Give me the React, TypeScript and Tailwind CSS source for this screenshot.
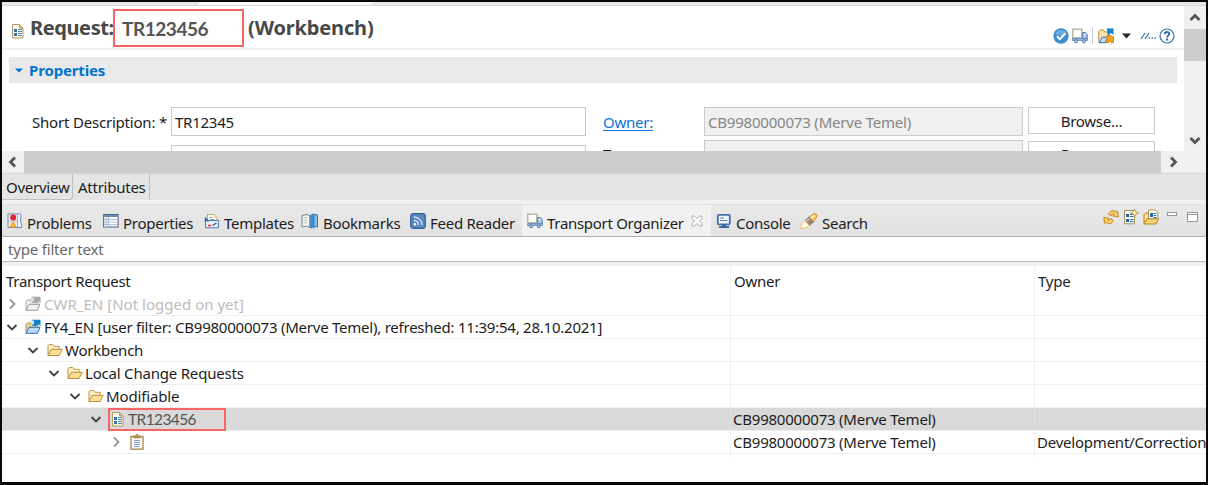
import React from "react";

type P = { className?: string };
const S = ({ className = "", children, w = 16, h = 16 }: P & { children: React.ReactNode; w?: number; h?: number }) => (
  <svg width={w} height={h} viewBox={`0 0 ${w} ${h}`} className={`block shrink-0 ${className}`}>{children}</svg>
);

const Doc = ({ className }: P) => (
  <S className={className}>
    <path d="M2.5 1.500h7l3.500 3.500v10h-10.500z" fill="#fbfaf3" stroke="#b39a5c" />
    <path d="M9.500 1.500v3.500h3.500z" fill="#e0c078" stroke="#b39a5c" strokeWidth=".8" />
    <path d="M4 6h3v3H4zM4 10h3v3H4z" fill="#2f77b5" />
    <path d="M8 6.500h4M8 8.500h4M8 10.500h4M8 12.500h4" stroke="#5a7fa8" />
  </S>
);

const Truck = ({ className }: P) => (
  <S className={className}>
    <rect x=".8" y="1.200" width="9" height="8.600" fill="#fff" stroke="#a9b294" strokeWidth="1.300" />
    <path d="M10.500 4.500h3l1.800 2.500v4h-4.800z" fill="#a9c4e4" stroke="#5b80b5" />
    <path d="M11.800 6h1.700v1.500h-1.700z" fill="#eef5fc" />
    <path d="M.5 10.500h15v2H.5z" fill="#8fafdb" stroke="#5b80b5" strokeWidth=".7" />
    <circle cx="4" cy="13.300" r="1.500" fill="#c7d8ee" stroke="#4f76ae" />
    <circle cx="11.800" cy="13.300" r="1.500" fill="#c7d8ee" stroke="#4f76ae" />
  </S>
);
const Check = ({ className }: P) => (
  <S className={className}>
    <circle cx="8" cy="8" r="7.700" fill="#3b8fd0" />
    <path d="M2 6a6.500 6.500 0 0 1 12 0Q8 9 2 6z" fill="#68addf" />
    <path d="M4 8.300l2.800 2.800L12.300 5.500" fill="none" stroke="#fff" strokeWidth="2" />
  </S>
);
const FolderRun = ({ className }: P) => (
  <S className={className}>
    <path d="M.8 14.500V3.500l1.500-1.500h3l1.500 2h3v10.500z" fill="#fbe3ab" stroke="#b98b43" />
    <path d="M8.500.500h7V7L13 5l-2.500 2.500z" fill="#1583ca" />
    <path d="M1.200 14.700l3-5.500h6l-2 5.500z" fill="#b7ddf8" stroke="#2a73be" />
    <path d="M8 9l2-1.500h3L14 9l1.500-.5v6h-2.500L12 13l-2 1.500H7.500V12h2z" fill="#f5a31a" stroke="#bd7003" strokeWidth=".7" />
  </S>
);
const Help = ({ className }: P) => (
  <S className={className}>
    <circle cx="8" cy="8" r="7" fill="#fff" stroke="#336fa9" strokeWidth="1.200" />
    <path d="M5.700 6.300C5.700 3.200 10.400 3.500 10.200 6.100C10.100 7.600 8.100 7.700 8.100 9.500" fill="none" stroke="#2f69a5" strokeWidth="1.900" />
    <rect x="7.100" y="10.500" width="2" height="2" fill="#2f69a5" />
  </S>
);
const Problems = ({ className }: P) => (
  <S className={className}>
    <path d="M1 1h11.500c3 0 1 3.500 1 6s2 4 1 7.500H1z" fill="#e9f0f9" stroke="#7189a8" />
    <path d="M1.500 8h9M10.500 1.500v12.500" stroke="#b79e78" strokeWidth=".8" />
    <circle cx="6.200" cy="4.500" r="3" fill="#df2637" />
    <path d="M3 14l2-4q1-1.500 2 0l2 4z" fill="#ffb52c" stroke="#ea9a16" strokeWidth=".8" />
  </S>
);
const Table = ({ className }: P) => (
  <S className={className}>
    <rect x=".6" y="1.500" width="14.500" height="12.500" fill="#f8fafc" stroke="#556b8e" strokeWidth="1.100" />
    <path d="M1 2h13.500v2H1z" fill="#718bb0" />
    <path d="M1 4h4.500v9.500H1z" fill="#dae5f3" />
    <path d="M5.500 4v10M1 6.500h14M1 9h14M1 11.500h14" stroke="#a6b4ca" strokeWidth=".8" />
  </S>
);
const Templates = ({ className }: P) => (
  <S className={className}>
    <path d="M3.500 9V1.500H10L13 4.500V9" fill="#fffdf2" stroke="#b5a577" />
    <path d="M10 1.500v3h3z" fill="#e4cc8a" />
    <path d="M5.500 4.500h3M5.500 6.500h5" stroke="#83a2cc" />
    <path d="M1.500 7.500h13v7.300h-13z" fill="#e6eef9" stroke="#5c78a4" />
    <path d="M1.500 4.500v4M1.500 5.500l3 3" stroke="#3b5f92" strokeWidth="1.500" />
    <path d="M4 12.500h3" stroke="#d7422f" strokeWidth="1.600" />
    <path d="M8.500 12.500l4-2.500" stroke="#31527f" strokeWidth="1.300" />
  </S>
);
const Book = ({ className }: P) => (
  <S className={className} w={18}>
    <path d="M1 2.500l5-1 3 1.500v11.500l-3-1.500-5 1z" fill="#fbfaf2" stroke="#67849c" />
    <path d="M2.500 5l4-.5M2.500 7.500l4-.5M2.500 10l4-.5" stroke="#a9b8c0" />
    <path d="M9 3l3-2 4.500 1v12l-4.500-1-3 1.500z" fill="#8ac1ed" stroke="#326f9e" />
    <path d="M10 3l3.500-1.500v14.500l-1.700-1.500-1.800 1.500z" fill="#2e8cda" />
    <path d="M14.800 3v10" stroke="#c8b078" />
  </S>
);
const Feed = ({ className }: P) => (
  <S className={className}>
    <rect x=".7" y=".7" width="14.600" height="14.600" rx="2.500" fill="#5a87bd" stroke="#326294" strokeWidth="1.200" />
    <path d="M4 4a8 8 0 0 1 8 8M4 7.500a4.500 4.500 0 0 1 4.500 4.500" fill="none" stroke="#dfeaf7" strokeWidth="1.300" />
    <circle cx="4.900" cy="11.300" r="1.200" fill="#fff" />
  </S>
);
const CloseX = ({ className }: P) => (
  <S className={className} w={12} h={12}>
    <path d="M1 1h2.500L6 3.500 8.500 1H11v2.500L8.500 6 11 8.500V11H8.500L6 8.500 3.500 11H1V8.500L3.500 6 1 3.500z" fill="#fafafa" stroke="#a4a4a4" strokeWidth=".9" />
  </S>
);
const Console = ({ className }: P) => (
  <S className={className}>
    <rect x="1.800" y="1.800" width="12" height="9.500" rx="1" fill="#eff5fd" stroke="#4470aa" strokeWidth="1.800" />
    <path d="M4 5h4M4 7.500h7" stroke="#6a7faa" strokeWidth="1" />
    <path d="M6 12h4v1.500H6z" fill="#315d9b" />
    <path d="M3 14h10" stroke="#315d9b" strokeWidth="1.800" />
  </S>
);
const Flash = ({ className }: P) => (
  <S className={className} w={18}>
    <path d="M8.500 4.500L14 .6q3 .2 3.300 2.400L13 9.500z" fill="#f8c860" stroke="#cd9135" />
    <path d="M11 5.200l3.500-2.700" stroke="#fff0b5" strokeWidth="1.600" />
    <path d="M5 7.500l4-3.500 4.500 5-4.500 3.500z" fill="#9b857c" stroke="#716567" strokeWidth=".7" />
    <path d="M6.500 8L9.500 5.500" stroke="#d8cfc9" strokeWidth="1.500" />
    <path d="M5 7.500Q1 10 .6 15.500 7 15.500 9 12.500z" fill="#fff8de" stroke="#edbc66" strokeWidth=".9" />
  </S>
);
const Refresh = ({ className }: P) => (
  <S className={className}>
    <path d="M5.500 5C7 1.500 11 .8 12.800 3L14.500 2.200 15.300 8 9.800 6.800 11.200 5.500C9.800 4.200 8.300 4.700 8 6.800z" fill="#ffd163" stroke="#b97913" strokeWidth=".9" strokeLinejoin="round" />
    <path d="M10.300 11.500C9 15 5.500 15.500 3.500 13.500L1.500 14.300 .8 8.300 6.300 9.500 4.900 10.800C6.200 12 7.700 11.500 8 9.500z" fill="#ffd163" stroke="#b97913" strokeWidth=".9" strokeLinejoin="round" />
  </S>
);
const NewDoc = ({ className }: P) => (
  <S className={className}>
    <path d="M1.500 1.500h10v13.300h-10z" fill="#f9faf4" stroke="#a79261" />
    <path d="M3 5h3v3H3zM3 10h3v3H3z" fill="#2465a4" />
    <path d="M7 5.500h3.500M7 7.500h3.500M7 10.500h3.500M7 12.500h3.500" stroke="#2d6cac" />
    <path d="M11.500 0l1.200 2.700L15.500 4l-2.800 1.200L11.500 8l-1.200-2.800L7.500 4l2.800-1.300z" fill="#fff2b1" stroke="#ad8937" strokeWidth=".8" />
  </S>
);
const OpenDoc = ({ className }: P) => (
  <S className={className}>
    <path d="M1 14.500V5.500l1.500-1.500h3v6" fill="#ffe29a" stroke="#b78022" />
    <path d="M5.500 10V.8H12L14.800 3v7z" fill="#fbfaf2" stroke="#b3944c" />
    <path d="M7 4h3v4H7z" fill="#2568ac" />
    <path d="M10.500 4.500h2.800M10.500 6.500h2.800M10.500 8.500h2.800" stroke="#2568ac" />
    <path d="M1 15l3-5.200h11.500l-2.500 5.200z" fill="#fbd476" stroke="#b78022" />
  </S>
);
const Folder = ({ className }: P) => (
  <S className={className}>
    <path d="M1 13.500V3.800l1.200-1.300h3.600l1.400 1.800h5v3" fill="#fdedc5" stroke="#bf954d" />
    <path d="M1 13.500L4.300 7.300h11L12 13.500z" fill="#fddf91" stroke="#bd8e3f" />
  </S>
);
const System = ({ gray = false, className }: P & { gray?: boolean }) => {
  const c = gray ? "#999" : "#346bb9";
  return (
    <S className={className}>
      <path d="M1 14V5.500l1.400-1.500h3.500l1.500 2h5.500v3" fill={gray ? "#eee" : "#e9d68d"} stroke={gray ? "#a8a8a8" : "#9b9b63"} />
      <path d="M6.500 .8h9V7L13 5.200 10.800 7H7.500z" fill={gray ? "#a5a5a5" : "#1380ca"} />
      <path d="M6 1.500h3v4H6z" fill={gray ? "#ddd" : "#c9e5f9"} />
      <path d="M1 14.300l3-6h11l-2.500 6z" fill={gray ? "#f0f0f0" : "#b9d9fb"} stroke={c} />
    </S>
  );
};
const Clip = ({ className }: P) => (
  <S className={className}>
    <rect x="2" y="2.500" width="12" height="12.700" fill="#fdfdfd" stroke="#b09659" strokeWidth="1.500" />
    <path d="M4.500 4V2h2l.5-1.500h2L9.500 2h2v2z" fill="#bc9751" stroke="#8f7238" strokeWidth=".5" />
    <path d="M5 6.500h6M5 8.500h6M5 10.500h6M5 12.500h5" stroke="#7e99cd" />
  </S>
);
const Chevron = ({ dir, className = "", color = "#404040", sw = 2 }: P & { dir: "up" | "down" | "left" | "right"; color?: string; sw?: number }) => {
  const d = { up: "M1.500 8L6 3.500 10.500 8", down: "M1.500 4L6 8.500 10.500 4", left: "M8 1.500L3.500 6 8 10.500", right: "M4 1.500L8.500 6 4 10.500" }[dir];
  return <S w={12} h={12} className={className}><path d={d} fill="none" stroke={color} strokeWidth={sw} /></S>;
};

const ViewTab = ({ icon, label, w, cls = "" }: { icon: React.ReactNode; label: string; w: string; cls?: string }) => (
  <div className={`flex h-[31px] shrink-0 items-center pt-[4px] tracking-[-0.27px] ${w} ${cls}`}>
    <div className="mb-[3px] mr-[4px]">{icon}</div>
    <span>{label}</span>
  </div>
);

const Row = ({ pad, state, icon, label, owner = "", type = "", cls = "", selected = false }: {
  pad: string; state: "right" | "down"; icon: React.ReactNode; label: React.ReactNode; owner?: string; type?: string; cls?: string; selected?: boolean;
}) => (
  <div className={`flex h-[23px] shrink-0 border-b border-[#eeeeee] ${selected ? "bg-[#d9d9d9]" : ""}`}>
    <div className={`flex w-[729px] shrink-0 items-center border-r ${selected ? "border-[#e0e0e0]" : "border-[#eeeeee]"} ${pad}`}>
      <Chevron dir={state} color={state === "right" ? "#969696" : "#404040"} sw={1.8} className="mr-[7px]" />
      {icon}
      <span className={cls}>{label}</span>
    </div>
    <div className={`flex w-[304px] shrink-0 items-center border-r pl-[2px] tracking-[-0.22px] ${selected ? "border-[#e0e0e0]" : "border-[#eeeeee]"}`}>{owner}</div>
    <div className="flex items-center pl-[2px] tracking-[-0.22px]">{type}</div>
  </div>
);

export default function App() {
  return (
    <div className="flex h-[485px] w-[1208px] flex-col overflow-hidden whitespace-nowrap border-2 border-b-[3px] border-[#080808] bg-white font-['Noto_Sans','Open_Sans',sans-serif] text-[15px] leading-[20px] tracking-[-0.25px] text-[#1c1c1c]">
      <div className="flex h-[4px] shrink-0 border-b border-[#d8d8d8] bg-[#e8e8e8]">
        <div className="ml-[197px] h-[3px] w-[173px] bg-[#fafafa]" />
      </div>
      <div className="flex h-[145px] shrink-0">
        <div className="h-[145px] w-[1182px] overflow-hidden">
          <div className="flex h-[44px] items-start border-b-2 border-[#f1f1f1]">
            <Doc className="ml-[8px] mt-[17px]" />
            <h1 className="ml-[4px] mt-[9px] w-[84px] text-[20px] font-bold leading-[26px] tracking-[-0.4px] text-[#484848]">Request:</h1>
            <div className="-ml-px mt-[3px] h-[38px] w-[131px] border-2 border-[#f76464] bg-white pl-[7px] pt-[5px] font-['Lato','Open_Sans',sans-serif] text-[19px] font-bold leading-[26px] tracking-[-0.45px] text-[#555555]">TR123456</div>
            <h1 className="ml-[4px] mt-[9px] text-[20px] font-bold leading-[26px] tracking-[-0.15px] text-[#484848]">(Workbench)</h1>
            <div className="ml-auto mr-[9px] mt-[21px] flex items-center">
              <Check className="mr-[3px]" />
              <Truck className="mr-[4px]" />
              <div className="mr-[5px] h-[17px] w-px bg-[#c9c9c9]" />
              <FolderRun className="mr-[8px]" />
              <S w={9} h={6} className="mr-[9px]"><path d="M0 .5h9L4.500 5.500z" fill="#222" /></S>
              <S w={16} h={8} className="mr-[3px]"><path d="M1 7l4-6M5 7l4-6" stroke="#3b76ac" strokeWidth="1.300" /><path d="M8.500 6h1.500M11.500 6H13M14.500 6H16" stroke="#3b76ac" strokeWidth="1.500" /></S>
              <Help />
            </div>
          </div>
          <div className="ml-[7px] mt-[7px] flex h-[26px] w-[1168px] items-center bg-[#e9e9e9] pl-[6px] font-bold text-[#0073d1]">
            <S w={8} h={5} className="mr-[6px]"><path d="M0 .5h8L4 4.500z" fill="#0073d1" /></S>
            <span className="tracking-[-0.15px]">Properties</span>
          </div>
          <div className="mt-[24px] flex h-[29px] items-center">
            <span className="ml-[30px] w-[139px] tracking-[-0.2px]">Short Description: *</span>
            <div className="flex h-[29px] w-[415px] items-center border border-[#c9c9c9] pl-[3px]">TR12345</div>
            <span className="ml-[17px] w-[101px] text-[#0a74d8] underline decoration-1 underline-offset-[2px]">Owner:</span>
            <div className="flex h-[29px] w-[319px] items-center border border-[#cccccc] bg-[#f0f0f0] pl-[3px] tracking-[-0.2px] text-[#868686]">CB9980000073 (Merve Temel)</div>
            <div className="mb-[2px] ml-[5px] flex h-[27px] w-[127px] items-center justify-center border border-[#c9c9c9]">Browse...</div>
          </div>
          <div className="flex items-start">
            <div className="ml-[169px] mt-[9px] h-[29px] w-[415px] border border-[#c9c9c9]" />
            <span className="ml-[17px] mt-[8px] w-[101px]">Type:</span>
            <div className="mt-[4px] h-[29px] w-[319px] border border-[#cccccc] bg-[#f0f0f0]" />
            <div className="ml-[5px] mt-[5px] flex h-[27px] w-[127px] items-start justify-center border border-[#c9c9c9] pt-[2px]">Browse...</div>
          </div>
        </div>
        <div className="flex w-[22px] flex-col items-center bg-[#f0f0f0]">
          <div className="flex h-[23px] items-center"><Chevron dir="up" color="#555" sw={2.8} /></div>
          <div className="h-[32px] w-full bg-[#cdcdcd]" />
          <Chevron dir="down" color="#555" sw={2.8} className="mb-[5px] mt-auto" />
        </div>
      </div>
      <div className="flex h-[22px] shrink-0 items-center bg-[#f0f0f0]">
        <Chevron dir="left" color="#555" sw={2.8} className="mx-[5px]" />
        <div className="h-full w-[1137px] bg-[#cdcdcd]" />
        <Chevron dir="right" color="#555" sw={2.8} className="ml-[6px]" />
      </div>
      <div className="flex h-[27px] shrink-0 border-t border-[#d6d6d6] bg-[#e5e5e5]">
        <div className="h-[26px] w-[71px] rounded-br border-b border-r border-[#bebebe] pl-[4px] pt-[3px] tracking-[-0.25px]">Overview</div>
        <div className="h-[26px] w-[77px] border-r border-[#c2c2c2] pl-[5px] pt-[3px]">Attributes</div>
      </div>
      <div className="h-[5px] shrink-0 border-b border-[#e1e1e1] bg-[#f1f1f1]" />
      <div className="flex h-[32px] shrink-0 border-b border-[#b0b0b0] bg-gradient-to-b from-[#e9e9e9] to-[#e2e2e2]">
        <ViewTab icon={<Problems />} label="Problems" w="w-[97px]" cls="pl-[5px]" />
        <ViewTab icon={<Table />} label="Properties" w="w-[101px]" cls="pl-[4px]" />
        <ViewTab icon={<Templates />} label="Templates" w="w-[99px]" cls="pl-[4px]" />
        <ViewTab icon={<Book />} label="Bookmarks" w="w-[107px]" cls="pl-[2px]" />
        <ViewTab icon={<Feed />} label="Feed Reader" w="w-[116px]" cls="pl-[4px]" />
        <div className="flex h-[31px] w-[189px] shrink-0 items-center bg-[#f1f1f1] pl-[5px] pt-[4px]">
          <Truck className="mb-[3px] mr-[4px]" />
          <span className="w-[144px] tracking-[-0.3px]">Transport Organizer</span>
          <CloseX className="mb-[3px]" />
        </div>
        <ViewTab icon={<Console />} label="Console" w="w-[86px]" cls="pl-[5px]" />
        <ViewTab icon={<Flash />} label="Search" w="w-[80px]" cls="pl-[3px]" />
        <div className="ml-auto mr-[8px] mt-[4px] flex items-start">
          <Refresh className="mr-[4px]" />
          <NewDoc className="mr-[4px]" />
          <OpenDoc className="mr-[8px]" />
          <S w={10} h={16} className="mr-[10px]"><rect x=".5" y="3.500" width="9" height="3" fill="#fff" stroke="#969696" /></S>
          <S w={11} h={16}><path d="M.5 3.500h10v9H.5zM.5 5.500h10" fill="#fff" stroke="#969696" /></S>
        </div>
      </div>
      <div className="flex h-[25px] shrink-0 items-center border-b border-[#bcbcbc] pl-[6px] tracking-[-0.18px] text-[#676767]">type filter text</div>
      <div className="h-[4px] shrink-0 bg-[#f1f1f1]" />
      <div className="flex h-[27px] shrink-0">
        <div className="w-[729px] border-r border-[#eeeeee] pl-[4px] pt-[5px] tracking-[-0.3px]">Transport Request</div>
        <div className="w-[304px] border-r border-[#eeeeee] pl-[3px] pt-[5px]">Owner</div>
        <div className="pl-[3px] pt-[5px]">Type</div>
      </div>
      <Row pad="pl-[4px]" state="right" icon={<System gray className="mr-[3px]" />} label="CWR_EN [Not logged on yet]" cls="text-[#bcbcbc] tracking-[0.02px]" />
      <Row pad="pl-[4px]" state="down" icon={<System className="mr-[3px]" />} label="FY4_EN [user filter: CB9980000073 (Merve Temel), refreshed: 11:39:54, 28.10.2021]" cls="tracking-[-0.235px]" />
      <Row pad="pl-[25px]" state="down" icon={<Folder className="ml-px mr-[2px]" />} label="Workbench" />
      <Row pad="pl-[46px]" state="down" icon={<Folder className="mr-[2px]" />} label="Local Change Requests" cls="tracking-[-0.2px]" />
      <Row pad="pl-[67px]" state="down" icon={<Folder className="mr-[2px]" />} label="Modifiable" cls="tracking-[-0.15px]" />
      <Row
        selected pad="pl-[88px]" state="down" owner="CB9980000073 (Merve Temel)"
        icon={null}
        label={
          <span className="-ml-[1px] flex h-[23px] w-[118px] items-center border-2 border-[#f76464] pb-px font-['Lato','Open_Sans',sans-serif] text-[15.5px] tracking-[-0.6px] text-[#555555]">
            <Doc className="mr-[2px]" />TR123456
          </span>
        }
      />
      <Row pad="pl-[108px]" state="right" icon={<Clip />} label="" owner="CB9980000073 (Merve Temel)" type="Development/Correction" />
      <div className="flex h-[3px] shrink-0">
        <div className="w-[729px] border-r border-[#eeeeee]" />
        <div className="w-[304px] border-r border-[#eeeeee]" />
      </div>
    </div>
  );
}
